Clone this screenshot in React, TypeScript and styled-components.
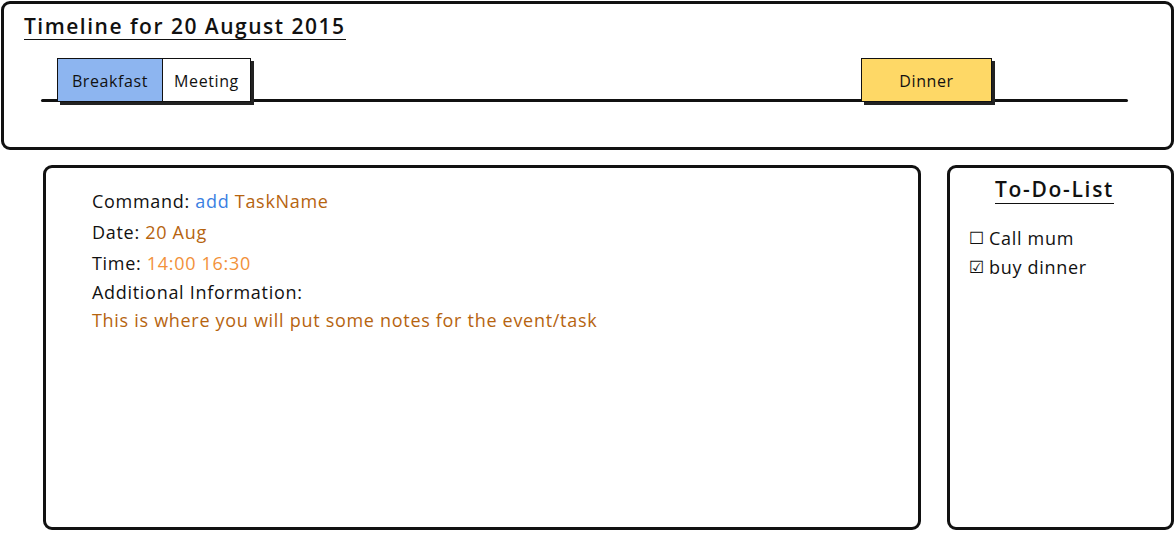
import React from "react";
import styled, { createGlobalStyle } from "styled-components";

const Global = createGlobalStyle`
  html, body { margin: 0; padding: 0; background: #fff; }
  body { font-family: "Open Sans", "Liberation Sans", sans-serif; color: #111; }
`;

const Page = styled.div`
  width: 1176px;
  height: 533px;
  box-sizing: border-box;
  padding: 1px 2px 3px 1px;
  display: flex;
  flex-direction: column;
  gap: 15px;
`;

const Panel = styled.section`
  box-sizing: border-box;
  border: 3px solid #111;
  border-radius: 9px;
  background: #fff;
`;

const TopPanel = styled(Panel)`
  height: 149px;
  padding: 10px 0 0 20px;
  display: flex;
  flex-direction: column;
`;

const Heading = styled.h1`
  margin: 0;
  font-size: 21px;
  font-weight: 600;
  line-height: 25px;
  letter-spacing: 1.5px;
  display: inline-block;
  align-self: flex-start;
  border-bottom: 1.5px solid #111;
`;

const Track = styled.div`
  position: relative;
  margin: 18px 0 0 17px;
  width: 1087px;
  height: 44px;
`;

const Line = styled.div`
  position: absolute;
  left: 0;
  right: 0;
  top: 41px;
  height: 3px;
  border-radius: 2px;
  background: #111;
`;

const Event = styled.div<{ $bg: string }>`
  position: absolute;
  top: 0;
  height: 44px;
  box-sizing: border-box;
  border: 1.5px solid #111;
  background: ${(p) => p.$bg};
  box-shadow: 3px 3px 0 #222;
  display: flex;
  align-items: center;
  justify-content: center;
  padding-top: 1px;
  font-size: 16px;
  letter-spacing: 0.6px;
  color: #111;
`;

const Row = styled.div`
  flex: 1;
  display: flex;
  gap: 26px;
  padding-left: 42px;
`;

const MainPanel = styled(Panel)`
  width: 878px;
  padding: 18px 0 0 46px;
`;

const TodoPanel = styled(Panel)`
  flex: 1;
  padding: 8px 0 0 19px;
  display: flex;
  flex-direction: column;
`;

const Field = styled.div<{ $h: number }>`
  height: ${(p) => p.$h}px;
  line-height: ${(p) => p.$h}px;
  font-size: 18px;
  letter-spacing: 0.7px;
  white-space: pre;
`;

const Span = styled.span<{ $c: string }>`
  color: ${(p) => p.$c};
`;

const TodoTitle = styled.h2`
  margin: 0 0 19px -31px;
  align-self: center;
  font-size: 21px;
  font-weight: 600;
  line-height: 27px;
  letter-spacing: 1.7px;
  border-bottom: 1.5px solid #111;
`;

const Item = styled.div`
  height: 29px;
  display: flex;
  align-items: center;
  gap: 4px;
  font-size: 18px;
  letter-spacing: 0.7px;
`;

const Box = styled.span`
  font-size: 17px;
  width: 16px;
  letter-spacing: 0;
  font-family: "DejaVu Sans", sans-serif;
`;

const BLUE = "#3b80e2";
const BROWN = "#b6640f";
const ORANGE = "#f2913a";

export default function App() {
  return (
    <>
      <Global />
      <Page>
        <TopPanel>
          <Heading>Timeline for 20 August 2015</Heading>
          <Track>
            <Line />
            <Event $bg="#8db5f0" style={{ left: 16, width: 106 }}>Breakfast</Event>
            <Event $bg="#ffffff" style={{ left: 121, width: 89 }}>Meeting</Event>
            <Event $bg="#fed866" style={{ left: 820, width: 131 }}>Dinner</Event>
          </Track>
        </TopPanel>
        <Row>
          <MainPanel>
            <Field $h={31}>
              Command: <Span $c={BLUE}>add</Span> <Span $c={BROWN}>TaskName</Span>
            </Field>
            <Field $h={31}>
              Date: <Span $c={BROWN}>20 Aug</Span>
            </Field>
            <Field $h={30}>
              Time: <Span $c={ORANGE}>14:00 16:30</Span>
            </Field>
            <Field $h={28}>Additional Information:</Field>
            <Field $h={28}>
              <Span $c={BROWN}>This is where you will put some notes for the event/task</Span>
            </Field>
          </MainPanel>
          <TodoPanel>
            <TodoTitle>To-Do-List</TodoTitle>
            <Item>
              <Box>☐</Box>Call mum
            </Item>
            <Item>
              <Box>☑</Box>buy dinner
            </Item>
          </TodoPanel>
        </Row>
      </Page>
    </>
  );
}
